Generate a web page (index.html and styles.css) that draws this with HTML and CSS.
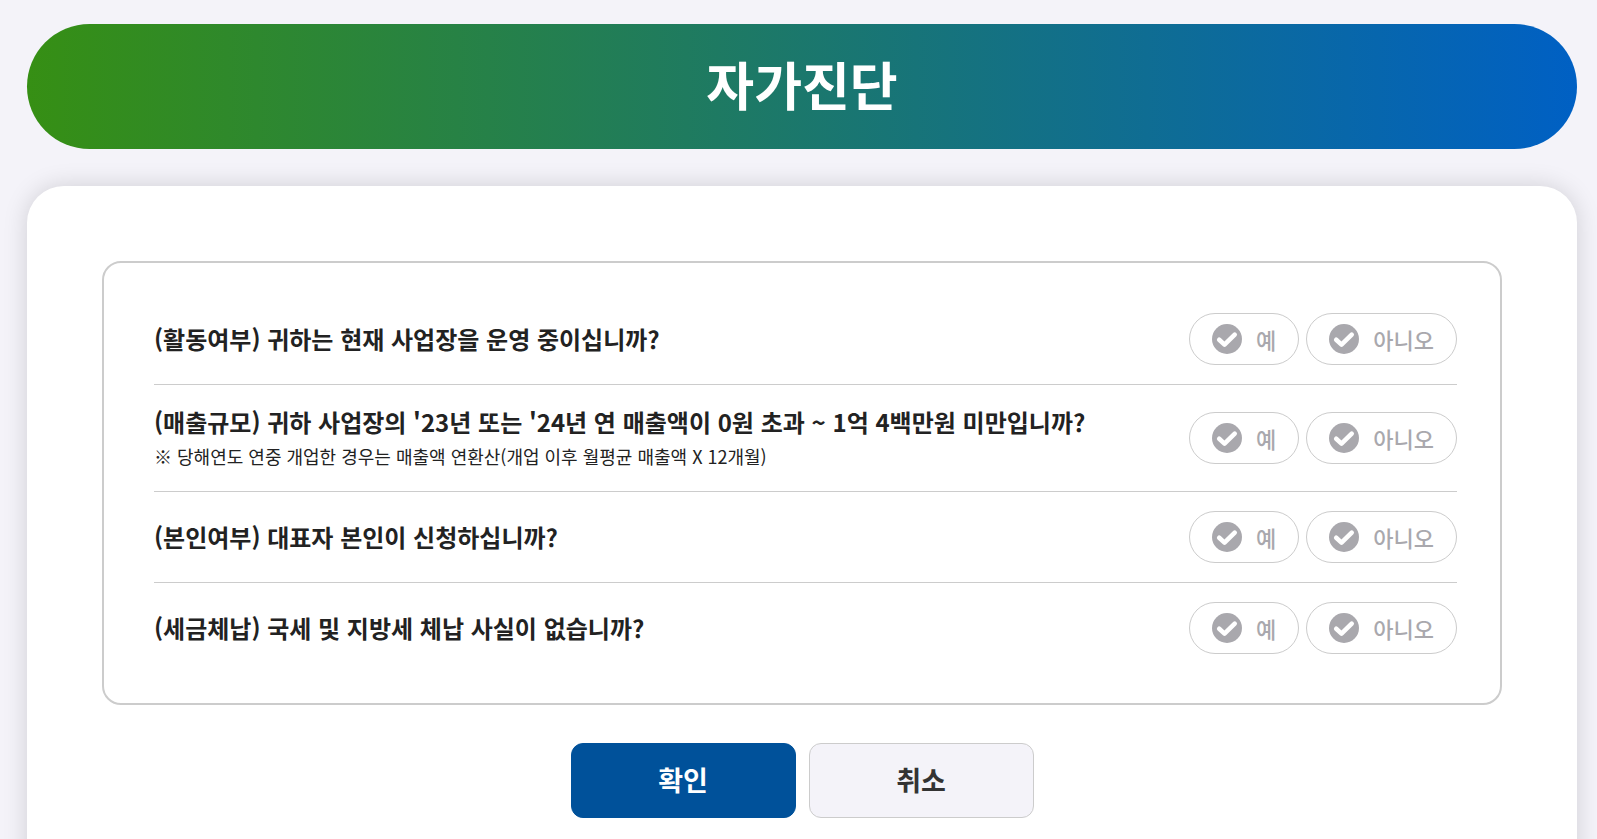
FILE: index.html
```html
<!DOCTYPE html>
<html lang="ko">
<head>
    <meta charset="UTF-8">
    <meta name="viewport" content="width=device-width, initial-scale=1.0">
    <title>자가진단</title>
    <link rel="stylesheet" href="styles.css">
</head>
<body>
    <svg class="sprite" aria-hidden="true">
        <symbol id="tick" viewBox="0 0 30 30">
            <path d="M7.2 15.8 L12.5 20.6 L22.7 10.6" fill="none" stroke="#fff" stroke-width="4.6" stroke-linecap="round" stroke-linejoin="round"/>
        </symbol>
    </svg>

    <header class="title-bar">
        <h1>자가진단</h1>
    </header>

    <main class="container">
        <form id="checkForm">
            <div class="question-box">
                <div class="question" role="radiogroup" aria-labelledby="q1">
                    <div class="question-text">
                        <p class="subject" id="q1">(활동여부) 귀하는 현재 사업장을 운영 중이십니까?</p>
                    </div>
                    <div class="answers">
                        <label class="answer"><span class="check"><input type="radio" name="active" value="Y"><svg><use href="#tick"/></svg></span>예</label>
                        <label class="answer"><span class="check"><input type="radio" name="active" value="N"><svg><use href="#tick"/></svg></span>아니오</label>
                    </div>
                </div>

                <div class="question" role="radiogroup" aria-labelledby="q2">
                    <div class="question-text">
                        <p class="subject" id="q2">(매출규모) 귀하 사업장의 '23년 또는 '24년 연 매출액이 0원 초과 ~ 1억 4백만원 미만입니까?</p>
                        <p class="note">※ 당해연도 연중 개업한 경우는 매출액 연환산(개업 이후 월평균 매출액 X 12개월)</p>
                    </div>
                    <div class="answers">
                        <label class="answer"><span class="check"><input type="radio" name="sales" value="Y"><svg><use href="#tick"/></svg></span>예</label>
                        <label class="answer"><span class="check"><input type="radio" name="sales" value="N"><svg><use href="#tick"/></svg></span>아니오</label>
                    </div>
                </div>

                <div class="question" role="radiogroup" aria-labelledby="q3">
                    <div class="question-text">
                        <p class="subject" id="q3">(본인여부) 대표자 본인이 신청하십니까?</p>
                    </div>
                    <div class="answers">
                        <label class="answer"><span class="check"><input type="radio" name="owner" value="Y"><svg><use href="#tick"/></svg></span>예</label>
                        <label class="answer"><span class="check"><input type="radio" name="owner" value="N"><svg><use href="#tick"/></svg></span>아니오</label>
                    </div>
                </div>

                <div class="question" role="radiogroup" aria-labelledby="q4">
                    <div class="question-text">
                        <p class="subject" id="q4">(세금체납) 국세 및 지방세 체납 사실이 없습니까?</p>
                    </div>
                    <div class="answers">
                        <label class="answer"><span class="check"><input type="radio" name="tax" value="Y"><svg><use href="#tick"/></svg></span>예</label>
                        <label class="answer"><span class="check"><input type="radio" name="tax" value="N"><svg><use href="#tick"/></svg></span>아니오</label>
                    </div>
                </div>
            </div>

            <div class="buttons">
                <button type="submit" class="btn btn-confirm">확인</button>
                <button type="reset" class="btn btn-cancel">취소</button>
            </div>
        </form>
    </main>
</body>
</html>
```
FILE: styles.css
```css
* {
    box-sizing: border-box;
}
body {
    font-family: "Noto Sans CJK KR", sans-serif;
    background-color: #f4f3f9;
    color: #222;
    margin: 0;
    padding: 24px 20px 0 27px;
}
h1, p {
    margin: 0;
}
.sprite {
    display: none;
}

/* Title */
.title-bar {
    display: flex;
    justify-content: center;
    align-items: center;
    height: 125px;
    padding-bottom: 5px;
    border-radius: 63px;
    background: linear-gradient(90deg, #368f14, #0060c4);
    color: #fff;
}
.title-bar h1 {
    font-size: 52px;
    line-height: 76px;
}

/* Questions */
.container {
    margin-top: 37px;
    padding: 75px;
    border-radius: 37px;
    background-color: #fff;
    box-shadow: 0 0 25px rgba(0, 0, 0, 0.15);
}
.question-box {
    padding: 31px 43px 30px 50px;
    border: 2px solid #ccc;
    border-radius: 19px;
}
.question {
    display: flex;
    justify-content: space-between;
    align-items: center;
    gap: 20px;
    padding: 19px 0;
}
.question + .question {
    border-top: 1px solid #ccc;
}
.subject {
    font-size: 24px;
    font-weight: bold;
    line-height: 36px;
}
.note {
    font-size: 18px;
    line-height: 32px;
}
.answers {
    display: flex;
    flex-shrink: 0;
    gap: 7px;
}
.answer {
    display: flex;
    align-items: center;
    gap: 14px;
    height: 52px;
    padding: 0 22px;
    border: 1px solid #ccc;
    border-radius: 26px;
    color: #a9a8ad;
    font-size: 22px;
    font-weight: 500;
    cursor: pointer;
}
.check {
    display: grid;
}
.check input, .check svg {
    grid-area: 1 / 1;
    width: 30px;
    height: 30px;
    margin: 0;
}
.check input {
    appearance: none;
    border-radius: 50%;
    background-color: #a9a8ad;
    cursor: pointer;
}
.check svg {
    pointer-events: none;
}
.answer:has(input:checked) {
    border-color: #00519a;
    color: #00519a;
}
.check input:checked {
    background-color: #00519a;
}

/* Buttons */
.buttons {
    display: flex;
    justify-content: center;
    gap: 13px;
    margin-top: 38px;
}
.btn {
    width: 225px;
    height: 75px;
    padding: 0 6px 3px;
    border: 1px solid #ccc;
    border-radius: 12px;
    font-family: inherit;
    font-size: 27px;
    font-weight: bold;
    cursor: pointer;
}
.btn-confirm {
    background-color: #00519a;
    border-color: #00519a;
    color: #fff;
}
.btn-cancel {
    background-color: #f4f3f9;
    color: #333;
}
```
